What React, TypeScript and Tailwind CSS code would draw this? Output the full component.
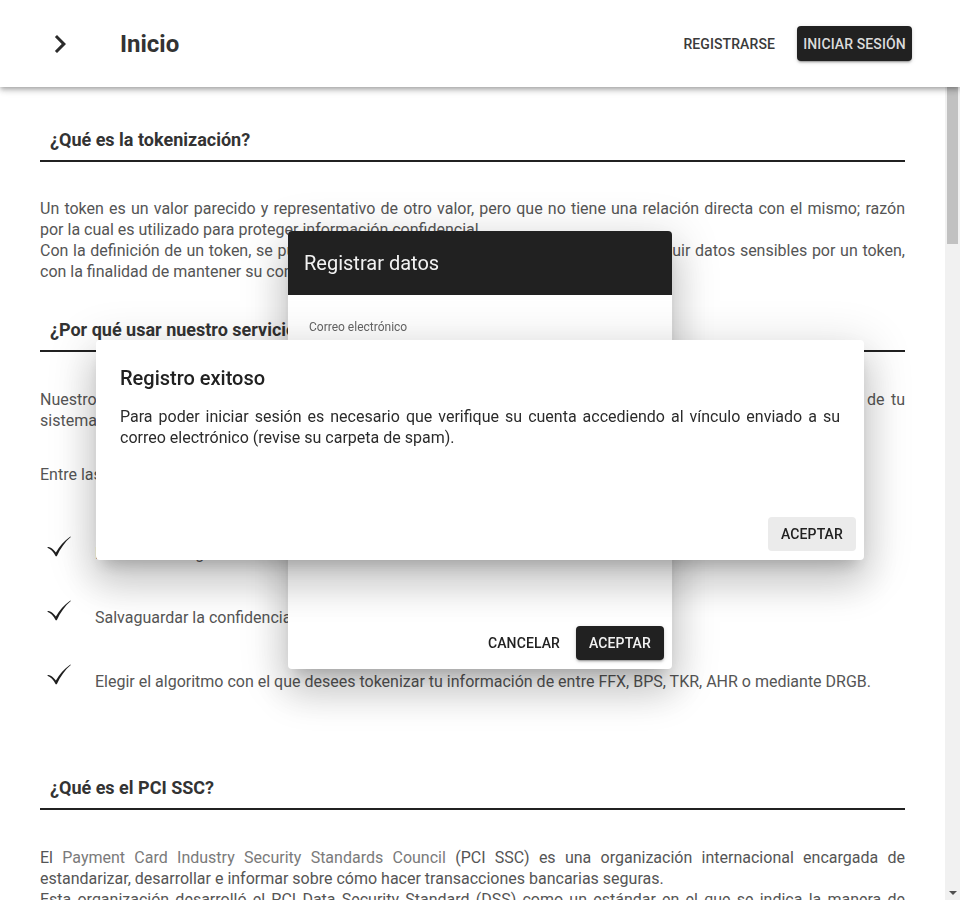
import type { ReactNode } from "react";

const paperShadow =
  "shadow-[0_11px_15px_-7px_rgba(0,0,0,0.2),0_24px_38px_3px_rgba(0,0,0,0.14),0_9px_46px_8px_rgba(0,0,0,0.12)]";

function ChevronRight() {
  return (
    <svg width="36" height="36" viewBox="0 0 24 24" fill="currentColor">
      <path d="M10 6 8.59 7.41 13.17 12l-4.58 4.59L10 18l6-6z" />
    </svg>
  );
}

function Tick() {
  return (
    <svg
      width="24"
      height="21"
      viewBox="0 0 24 21"
      fill="currentColor"
      className="ml-[7px] shrink-0 text-[#1f1f1f]"
    >
      <path d="M0.5 11.2C3.2 10.6 5.8 12.8 8.9 16.6 12.4 10.2 17.2 4.6 23.4 0.4L23.8 0.9C18.2 5.6 13.4 12.2 9.8 20.2L8.7 20.2C6.6 16.2 3.6 12.9 0.5 11.8Z" />
    </svg>
  );
}

function Heading({ children, className }: { children: ReactNode; className: string }) {
  return (
    <h2
      className={`${className} border-b-2 border-[#212121] px-[10px] pb-2 text-[18px] font-bold leading-6 text-[#333]`}
    >
      {children}
    </h2>
  );
}

const para = "text-justify text-[16px] leading-[21px] text-[#555]";

const ventajas = [
  "Reducir el riesgo de robo de información confidencial.",
  "Salvaguardar la confidencialidad de la información sensible de tus usuarios.",
  "Elegir el algoritmo con el que desees tokenizar tu información de entre FFX, BPS, TKR, AHR o mediante DRGB.",
];

export default function App() {
  return (
    <div className="flex h-screen flex-col bg-white font-['Roboto',sans-serif]">
      <header className="relative z-10 flex h-[87px] shrink-0 items-center bg-white pl-[42px] pr-12 shadow-[0_2px_4px_-1px_rgba(0,0,0,0.2),0_4px_5px_0_rgba(0,0,0,0.14),0_1px_10px_0_rgba(0,0,0,0.12)]">
        <span className="text-[#2b2b2b]">
          <ChevronRight />
        </span>
        <h1 className="ml-[42px] text-[24px] font-bold text-[#333]">Inicio</h1>
        <div className="ml-auto flex items-center gap-[14px]">
          <button
            type="button"
            className="h-[35px] px-2 pt-px text-[14px] font-medium uppercase tracking-[0.1px] text-[#3a3a3a]"
          >
            Registrarse
          </button>
          <button
            type="button"
            className="h-[35px] w-[115px] rounded-[4px] bg-[#212121] pt-px text-[14px] font-medium uppercase tracking-[0.1px] text-[#dcdcdc] shadow-[0_3px_1px_-2px_rgba(0,0,0,0.2),0_2px_2px_0_rgba(0,0,0,0.14),0_1px_5px_0_rgba(0,0,0,0.12)]"
          >
            Iniciar sesión
          </button>
        </div>
      </header>

      <div className="flex min-h-0 flex-1">
        <main className="flex-1 overflow-y-auto [scrollbar-width:none]">
          <div className="min-h-[4210px] px-10 pb-20 pt-[41px]">
            <Heading className="">¿Qué es la tokenización?</Heading>
            <p className={`${para} mt-[36px]`}>
              Un token es un valor parecido y representativo de otro valor, pero que no tiene una
              relación directa con el mismo; razón por la cual es utilizado para proteger
              información confidencial.
              <br />
              Con la definición de un token, se puede aplicar la tokenización, la cual consiste en
              sustituir datos sensibles por un token, con la finalidad de mantener su
              confidencialidad.
            </p>

            <Heading className="mt-[36px]">¿Por qué usar nuestro servicio?</Heading>
            <p className={`${para} mt-[37px]`}>
              Nuestro servicio te permite proteger la información sensible de tus usuarios sin
              modificar la lógica de negocio de tu sistema, reduciendo el alcance de las auditorías
              y el riesgo ante posibles filtraciones.
            </p>
            <p className={`${para} mt-[33px]`}>Entre las ventajas que te ofrecemos se encuentran:</p>
            <ul className="mt-[51px] flex flex-col gap-[36px]">
              {ventajas.map((v) => (
                <li key={v} className="flex">
                  <div className="w-[55px] shrink-0">
                    <Tick />
                  </div>
                  <span className={`${para} pt-[7px]`}>{v}</span>
                </li>
              ))}
            </ul>

            <Heading className="mt-[84px]">¿Qué es el PCI SSC?</Heading>
            <p className={`${para} mt-[37px]`}>
              El{" "}
              <span className="text-[#7a7a7a]">Payment Card Industry Security Standards Council</span>{" "}
              (PCI SSC) es una organización internacional encargada de estandarizar, desarrollar e
              informar sobre cómo hacer transacciones bancarias seguras.
              <br />
              Esta organización desarrolló el PCI Data Security Standard (DSS) como un estándar en
              el que se indica la manera de proteger la información de los tarjetahabientes durante
              su almacenamiento, procesamiento y transmisión.
            </p>

            <Heading className="mt-[84px]">¿Cómo funciona?</Heading>
            <p className={`${para} mt-[37px]`}>
              Una vez registrado, podrás generar llaves de acceso para tu aplicación y enviar los
              datos que desees tokenizar a través de nuestra API. Cada token generado puede ser
              recuperado posteriormente únicamente por los usuarios autorizados.
            </p>
          </div>
        </main>

        {/* barra de desplazamiento */}
        <div className="flex w-[15px] shrink-0 flex-col bg-[#f1f1f1]">
          <div className="mx-[2px] h-[157px] bg-[#c1c1c1]" />
          <div className="mt-auto flex h-[15px] items-center justify-center">
            <div className="h-0 w-0 border-x-[4px] border-t-[4px] border-x-transparent border-t-[#505050]" />
          </div>
        </div>
      </div>

      {/* diálogo de registro */}
      <div className="fixed inset-0 z-20 flex items-center justify-center">
        <div
          className={`flex h-[438px] w-[384px] flex-col overflow-hidden rounded-[4px] bg-white ${paperShadow}`}
        >
          <div className="flex h-16 shrink-0 items-center bg-[#212121] px-4 text-[20px] text-[#f2f2f2]">
            Registrar datos
          </div>
          <div className="flex flex-1 flex-col gap-6 px-[21px] pt-[25px]">
            <div className="border-b border-[#9e9e9e] pb-2">
              <p className="text-[12px] leading-[14px] text-[#666]">Correo electrónico</p>
              <div className="h-6" />
            </div>
            <div className="border-b border-[#9e9e9e] pb-2">
              <p className="text-[12px] leading-[14px] text-[#666]">Contraseña</p>
              <div className="h-6" />
            </div>
            <div className="border-b border-[#9e9e9e] pb-2">
              <p className="text-[12px] leading-[14px] text-[#666]">Confirmar contraseña</p>
              <div className="h-6" />
            </div>
          </div>
          <div className="flex justify-end gap-2 pb-[9px] pr-2">
            <button
              type="button"
              className="h-[34px] px-2 text-[14px] font-medium uppercase tracking-[0.1px] text-[#212121]"
            >
              Cancelar
            </button>
            <button
              type="button"
              className="h-[34px] w-[88px] rounded-[4px] bg-[#212121] text-[14px] font-medium uppercase tracking-[0.1px] text-[#f2f2f2] shadow-[0_3px_1px_-2px_rgba(0,0,0,0.2),0_2px_2px_0_rgba(0,0,0,0.14),0_1px_5px_0_rgba(0,0,0,0.12)]"
            >
              Aceptar
            </button>
          </div>
        </div>
      </div>

      {/* aviso de registro exitoso */}
      <div className="fixed inset-0 z-30 flex items-center justify-center">
        <div className={`flex h-[220px] w-[768px] flex-col rounded-[4px] bg-white ${paperShadow}`}>
          <h3 className="px-6 pt-6 text-[20px] font-medium leading-7 text-[#212121]">
            Registro exitoso
          </h3>
          <p className="mt-[14px] flex-1 px-6 text-justify text-[16px] leading-[21px] text-[#2b2b2b]">
            Para poder iniciar sesión es necesario que verifique su cuenta accediendo al vínculo
            enviado a su correo electrónico (revise su carpeta de spam).
          </p>
          <div className="flex justify-end pb-[9px] pr-2">
            <button
              type="button"
              className="h-[34px] w-[88px] rounded-[4px] bg-[#ebebeb] text-[14px] font-medium uppercase tracking-[0.1px] text-[#212121]"
            >
              Aceptar
            </button>
          </div>
        </div>
      </div>
    </div>
  );
}
